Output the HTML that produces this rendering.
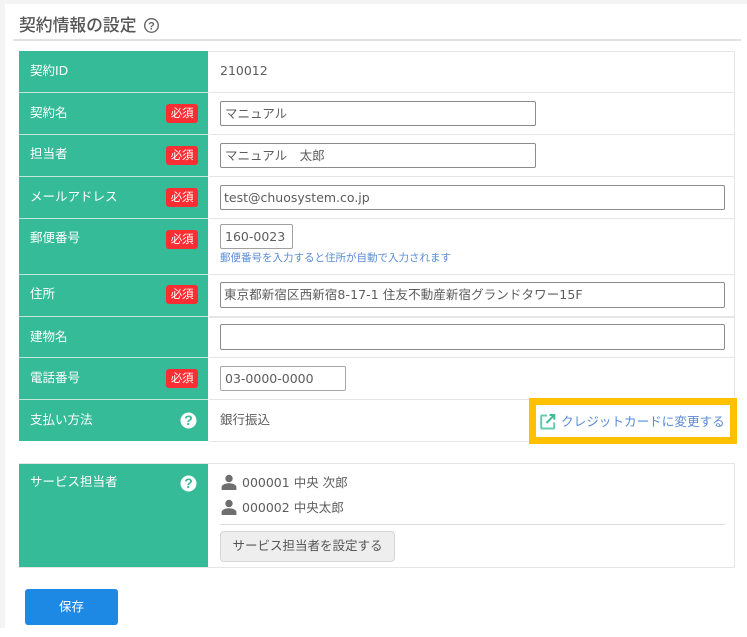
<!DOCTYPE html>
<html lang="ja">
<head>
<meta charset="utf-8">
<style>
html,body{margin:0;padding:0;background:#fff}
body{width:747px;height:637px;position:relative;overflow:hidden;font-family:"DejaVu Sans","Noto Sans CJK JP",sans-serif;color:#555;font-size:12.5px;filter:blur(.3px)}
.a{position:absolute;white-space:nowrap}
.g{position:absolute;left:19px;width:189px;background:#36bb98}
.l{position:absolute;left:30px;color:#fff;font-size:12.5px;line-height:18px;white-space:nowrap}
.h{position:absolute;left:209px;width:526px;height:1px;background:#e6e6e6}
.w{position:absolute;left:19px;width:189px;height:1px;background:#c4e5da}
.b{position:absolute;left:166px;width:32px;height:19px;background:#fb2e33;border-radius:3px;color:#fff;font-size:11.5px;line-height:19px;text-align:center;letter-spacing:-.2px}
.i{position:absolute;box-sizing:border-box;height:25px;border:1px solid #8c8c8c;border-radius:2px;background:#fff;padding-left:4px;font-size:12.5px;line-height:24px;color:#5c5c5c;white-space:nowrap;overflow:hidden}
.t{position:absolute;color:#5c5c5c;font-size:12.5px;line-height:18px;white-space:nowrap}
</style>
</head>
<body>
<div class="a" style="left:0;top:0;width:747px;height:4px;background:#f4f4f4"></div>
<div class="a" style="left:0;top:0;width:5px;height:628px;background:#f4f4f4"></div>
<div class="a" style="left:19px;top:14px;font-size:16.8px;line-height:22px;font-weight:500;color:#555">契約情報の設定</div>
<svg class="a" style="left:143px;top:17px" width="17" height="17" viewBox="0 0 17 17"><circle cx="8.5" cy="8.5" r="6.8" fill="none" stroke="#666" stroke-width="1.4"/><text x="8.5" y="12.5" font-size="11" font-weight="700" text-anchor="middle" fill="#666" font-family="Liberation Sans">?</text></svg>
<div class="a" style="left:13px;top:39px;width:728px;height:2px;background:#e2e2e2"></div>

<div class="a" style="left:19px;top:51px;width:716px;height:390px;box-sizing:border-box;border:1px solid #e6e6e6;border-bottom:0"></div>
<div class="g" style="top:51px;height:390px"></div>
<div class="h" style="top:92px"></div>
<div class="h" style="top:134px"></div>
<div class="h" style="top:176px"></div>
<div class="h" style="top:218px"></div>
<div class="h" style="top:274px"></div>
<div class="h" style="top:316px;height:2px"></div>
<div class="h" style="top:357px"></div>
<div class="h" style="top:399px"></div>
<div class="h" style="top:441px"></div>
<div class="w" style="top:92px"></div>
<div class="w" style="top:134px"></div>
<div class="w" style="top:176px"></div>
<div class="w" style="top:218px"></div>
<div class="w" style="top:274px"></div>
<div class="w" style="top:316px"></div>
<div class="w" style="top:357px"></div>
<div class="w" style="top:399px"></div>

<div class="l" style="top:62px">契約ID</div>
<div class="l" style="top:104px">契約名</div>
<div class="l" style="top:145px">担当者</div>
<div class="l" style="top:188px">メールアドレス</div>
<div class="l" style="top:229px">郵便番号</div>
<div class="l" style="top:285px">住所</div>
<div class="l" style="top:328px">建物名</div>
<div class="l" style="top:369px">電話番号</div>
<div class="l" style="top:411px">支払い方法</div>

<div class="b" style="top:104px">必須</div>
<div class="b" style="top:146px">必須</div>
<div class="b" style="top:188px">必須</div>
<div class="b" style="top:230px">必須</div>
<div class="b" style="top:285px">必須</div>
<div class="b" style="top:369px">必須</div>

<svg class="a" style="left:180px;top:412px" width="17" height="17" viewBox="0 0 17 17"><circle cx="8.5" cy="8.5" r="8" fill="#fff"/><text x="8.5" y="13.2" font-size="14" font-weight="700" text-anchor="middle" fill="#36bb98" font-family="Liberation Sans">?</text></svg>

<div class="t" style="left:220px;top:62px">210012</div>
<div class="i" style="left:220px;top:101px;width:316px">マニュアル</div>
<div class="i" style="left:220px;top:143px;width:316px">マニュアル　太郎</div>
<div class="i" style="left:220px;top:185px;width:505px;padding-left:3px">test@chuosystem.co.jp</div>
<div class="i" style="left:220px;top:224px;width:73px;border-color:#a0a0a0">160-0023</div>
<div class="a" style="left:220px;top:250px;font-size:10.5px;line-height:16px;color:#5a8bd6">郵便番号を入力すると住所が自動で入力されます</div>
<div class="i" style="left:220px;top:282px;width:505px;height:26px;padding-left:3px;letter-spacing:.1px">東京都新宿区西新宿8-17-1 住友不動産新宿グランドタワー15F</div>
<div class="i" style="left:220px;top:324px;width:505px;height:26px"></div>
<div class="i" style="left:220px;top:366px;width:126px;border-color:#a8a8a8">03-0000-0000</div>
<div class="t" style="left:220px;top:411px">銀行振込</div>

<div class="a" style="left:529px;top:398px;width:208px;height:46px;box-sizing:border-box;border:7px solid #ffc000;background:#fff"></div>
<svg class="a" style="left:540px;top:413px" width="16" height="17" viewBox="0 0 16 17"><path d="M7 2.5H2.2a1 1 0 0 0-1 1v11a1 1 0 0 0 1 1h11a1 1 0 0 0 1-1V9.5" fill="none" stroke="#62cfab" stroke-width="2"/><path d="M9.5 2h4.8v4.8M14 2.3L6.5 10" fill="none" stroke="#3fbf98" stroke-width="2"/></svg>
<div class="a" style="left:561px;top:413px;font-size:12.6px;line-height:18px;color:#5a8bd6">クレジットカードに変更する</div>

<div class="a" style="left:19px;top:463px;width:716px;height:105px;box-sizing:border-box;border:1px solid #e6e6e6"></div>
<div class="g" style="top:464px;height:103px"></div>
<div class="l" style="top:473px">サービス担当者</div>
<svg class="a" style="left:180px;top:475px" width="17" height="17" viewBox="0 0 17 17"><circle cx="8.5" cy="8.5" r="8" fill="#fff"/><text x="8.5" y="13.2" font-size="14" font-weight="700" text-anchor="middle" fill="#36bb98" font-family="Liberation Sans">?</text></svg>

<svg class="a" style="left:221px;top:474px" width="16" height="16" viewBox="0 0 16 16"><circle cx="8" cy="4.5" r="3.7" fill="#6e6e6e"/><path d="M.6 16v-3c0-2.6 4.6-3.8 7.4-3.8s7.4 1.2 7.4 3.8v3z" fill="#6e6e6e"/></svg>
<div class="t" style="left:242px;top:474px">000001 中央 次郎</div>
<svg class="a" style="left:221px;top:499px" width="16" height="16" viewBox="0 0 16 16"><circle cx="8" cy="4.5" r="3.7" fill="#6e6e6e"/><path d="M.6 16v-3c0-2.6 4.6-3.8 7.4-3.8s7.4 1.2 7.4 3.8v3z" fill="#6e6e6e"/></svg>
<div class="t" style="left:242px;top:499px">000002 中央太郎</div>
<div class="a" style="left:220px;top:524px;width:505px;height:1px;background:#ddd"></div>
<div class="a" style="left:220px;top:531px;width:175px;height:31px;box-sizing:border-box;background:#eee;border:1px solid #d6d6d6;border-radius:4px;text-align:center;line-height:28px;font-size:12.5px;color:#555">サービス担当者を設定する</div>

<div class="a" style="left:25px;top:589px;width:93px;height:36px;background:#1e88e5;border-radius:3px;text-align:center;color:#fff;font-size:12.5px;line-height:35px">保存</div>
</body>
</html>
